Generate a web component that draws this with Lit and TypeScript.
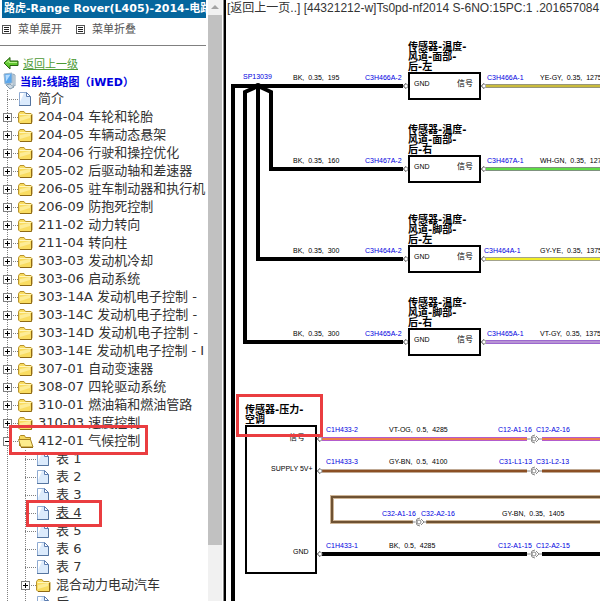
import { LitElement, html, svg, css } from "lit";
import { customElement, property } from "lit/decorators.js";
import { classMap } from "lit/directives/class-map.js";

interface TreeItem {
  label: string;
  kind: "page" | "folder" | "open";
  mark?: "section" | "leaf";
  children?: TreeItem[];
}

const page = (label: string, mark?: "leaf"): TreeItem => ({ label, kind: "page", mark });
const folder = (label: string): TreeItem => ({ label, kind: "folder" });

const TREE: TreeItem[] = [
  page("简介"),
  folder("204-04 车轮和轮胎"),
  folder("204-05 车辆动态悬架"),
  folder("204-06 行驶和操控优化"),
  folder("205-02 后驱动轴和差速器"),
  folder("206-05 驻车制动器和执行机"),
  folder("206-09 防抱死控制"),
  folder("211-02 动力转向"),
  folder("211-04 转向柱"),
  folder("303-03 发动机冷却"),
  folder("303-06 启动系统"),
  folder("303-14A 发动机电子控制 -"),
  folder("303-14C 发动机电子控制 -"),
  folder("303-14D 发动机电子控制 -"),
  folder("303-14E 发动机电子控制 - I"),
  folder("307-01 自动变速器"),
  folder("308-07 四轮驱动系统"),
  folder("310-01 燃油箱和燃油管路"),
  folder("310-03 速度控制"),
  {
    label: "412-01 气候控制",
    kind: "open",
    mark: "section",
    children: [
      page("表 1"),
      page("表 2"),
      page("表 3"),
      page("表 4", "leaf"),
      page("表 5"),
      page("表 6"),
      page("表 7"),
      folder("混合动力电动汽车"),
      page("后"),
    ],
  },
];

const pageIcon = html`<svg class="icon" viewBox="0 0 18 18" aria-hidden="true">
  <path d="M1.500 2.500h7l4 4v9h-11z" fill="#dcebfc" stroke="#8fabd2" />
  <path d="M2 3h4l-4 9z" fill="#fff" />
  <path d="M8.500 2.500v4h4z" fill="#fff" stroke="#5c7db0" />
  <path d="M1 15.500h11.500V7" fill="none" stroke="#54749f" />
</svg>`;

const folderIcon = html`<svg class="icon" viewBox="0 0 18 18" aria-hidden="true">
  <path d="M.5 14V5.500l1.500-2h4l1.500 2h5.500l1 1V14l-1 1.500H2z" fill="#f9dc61" stroke="#b9932c" />
  <path d="M1.500 6.500H13" stroke="#fff6bd" />
  <path d="M2 9l10-2v3L2 13z" fill="#fdec96" />
  <path d="M2 15.500h11.500V7" fill="none" stroke="#8f6a14" />
</svg>`;

const openIcon = html`<svg class="icon" viewBox="0 0 18 18" aria-hidden="true">
  <path d="M1.500 14V4.500l1-1h4l1 2h5v3" fill="#f6d860" stroke="#b08a24" />
  <path d="M.5 7.500h12l2.500 7.500H3z" fill="#fdec8c" stroke="#a98320" />
  <path d="M3 15.500h12" stroke="#8f6a14" />
</svg>`;

@customElement("tree-node")
class TreeNode extends LitElement {
  @property({ attribute: false }) item!: TreeItem;

  static styles = css`
    :host { display: block; }
    .row { display: flex; align-items: center; height: 18px; position: relative; white-space: nowrap; }
    .branch {
      flex: none; width: 18px; height: 18px; display: flex; align-items: center; position: relative;
      background:
        repeating-linear-gradient(#808080 0 1px, transparent 1px 2px) 7px 0 / 1px 18px no-repeat,
        repeating-linear-gradient(90deg, #808080 0 1px, transparent 1px 2px) 7px 9px / 11px 1px no-repeat;
    }
    .toggle {
      box-sizing: border-box; width: 9px; height: 9px; margin: 1px 0 0 3px; padding: 0;
      border: 1px solid #808080; border-radius: 0;
      background:
        linear-gradient(#000, #000) center / 5px 1px no-repeat,
        linear-gradient(#000, #000) center / 1px 5px no-repeat,
        #fff;
    }
    .toggle.minus { background: linear-gradient(#000, #000) center / 5px 1px no-repeat, #fff; }
    .icon { flex: none; width: 18px; height: 18px; display: block; }
    .label {
      padding-left: 2px; color: #333; text-decoration: none;
      font: 13px/18px "DejaVu Sans", "Noto Sans CJK SC", sans-serif;
    }
    .label.active { text-decoration: underline; }
    .kids {
      padding-left: 18px;
      background: repeating-linear-gradient(#808080 0 1px, transparent 1px 2px) 7px 0 / 1px 100% no-repeat;
    }
    .mark { position: absolute; box-sizing: border-box; border: 3px solid #ea3d40; pointer-events: none; z-index: 1; }
    .mark.section { left: 9px; top: -7px; width: 139px; height: 30px; }
    .mark.leaf { left: 8px; top: -4px; width: 76px; height: 27px; }
  `;

  render() {
    const { label, kind, mark, children } = this.item;
    return html`
      <div class="row">
        <span class="branch">
          ${kind === "page"
            ? null
            : html`<button
                class=${classMap({ toggle: true, minus: kind === "open" })}
                aria-label=${label}
                aria-expanded=${kind === "open" ? "true" : "false"}
              ></button>`}
        </span>
        ${kind === "page" ? pageIcon : kind === "open" ? openIcon : folderIcon}
        <a class=${classMap({ label: true, active: mark === "leaf" })} href="#">${label}</a>
        ${mark ? html`<span class=${classMap({ mark: true, [mark]: true })}></span>` : null}
      </div>
      ${children
        ? html`<div class="kids">${children.map((c) => html`<tree-node .item=${c}></tree-node>`)}</div>`
        : null}
    `;
  }
}

interface Sensor {
  y: number;
  id: string;
  idX: number;
  title: string[];
  length: string;
  wire: string;
  edge: string;
  core: string;
}

const SENSORS: Sensor[] = [
  { y: 86, id: "C3H466A", idX: 487, title: ["传感器-温度-", "风道-面部-", "后-左"], length: "195", wire: "YE-GY,  0.35,  1275", edge: "#98967a", core: "#c9bb3c" },
  { y: 169, id: "C3H467A", idX: 487, title: ["传感器-温度-", "风道-面部-", "后-右"], length: "160", wire: "WH-GN,  0.35,  1275", edge: "#7f927f", core: "#5fdc46" },
  { y: 259, id: "C3H464A", idX: 484, title: ["传感器-温度-", "风道-脚部-", "后-左"], length: "300", wire: "GY-YE,  0.35,  1375", edge: "#a3a38c", core: "#f2ee26" },
  { y: 342, id: "C3H465A", idX: 487, title: ["传感器-温度-", "风道-脚部-", "后-右"], length: "300", wire: "VT-GY,  0.35,  1375", edge: "#9c68cf", core: "#b793d4" },
];

const wire = (d: string, edge: string, core: string) => svg`
  <path class="wire edge" d=${d} stroke=${edge} />
  <path class="wire core" d=${d} stroke=${core} />`;

const plug = (x: number, y: number) => svg`
  <path class="pin" d="M${x - 3} ${y}l3-3M${x - 3} ${y}l3 3" />
  <circle class="pin" cx=${x} cy=${y} r="2" />`;

const joint = (x: number, y: number) => svg`
  <path class="pin" d="M${x - 7} ${y}h3M${x + 4} ${y}h4M${x + 1} ${y - 4}a4 4 0 1 0 0 8M${x + 2} ${y - 3}l3 3l-3 3" />
  <circle class="pin" cx=${x} cy=${y} r="2" />`;

const note = (x: number, y: number, text: string) => svg`<text class="note" x=${x} y=${y}>${text}</text>`;
const ref = (x: number, y: number, text: string) => svg`<text class="note ref" x=${x} y=${y}>${text}</text>`;
const title = (x: number, y: number, lines: string[]) =>
  lines.map((line, i) => svg`<text class="title" x=${x} y=${y + i * 10}>${line}</text>`);

@customElement("wiring-diagram")
class WiringDiagram extends LitElement {
  static styles = css`
    :host { display: block; overflow: hidden; }
    .sheet { display: block; width: 100%; height: 100%; }
    .wire { fill: none; }
    .edge { stroke-width: 4; }
    .core { stroke-width: 2; }
    .bus { fill: none; stroke: #000; stroke-width: 4; }
    .box { fill: #fff; stroke: #000; stroke-width: 2; }
    .pin { fill: none; stroke: #888; }
    .note { font: 7px "Liberation Sans", sans-serif; white-space: pre; fill: #000; }
    .ref { fill: #0000e0; }
    .signal { font: 8px "Noto Sans CJK SC", sans-serif; fill: #000; }
    .title { font: bold 10px "DejaVu Sans", "Noto Sans CJK SC", sans-serif; fill: #000; }
    .mark { fill: none; stroke: #ea3d40; stroke-width: 3; shape-rendering: crispEdges; }
  `;

  render() {
    return html`<svg class="sheet" role="img" aria-label="线路图">
      <g transform="translate(-227 -18)">
        <path class="bus" d="M403 86H233V2000" />
        <path class="bus" d="M258 86L245 92V342H403" />
        <path class="bus" d="M258 86V259H403" />
        <path class="bus" d="M258 86L271 92V169H403" />
        <circle cx="258" cy="86" r="3" />
        ${ref(243, 79, "SP13039")}
        ${SENSORS.map(
          (s) => svg`
            ${note(293, s.y - 6, `BK,  0.35,  ${s.length}`)}
            ${ref(365, s.y - 6, `${s.id}-2`)}
            ${plug(406, s.y)}
            <rect class="box" x="409" y=${s.y - 13} width="71" height="26" />
            ${title(408, s.y - 36, s.title)}
            ${note(414, s.y, "GND")}
            <text class="signal" x="457" y=${s.y}>信号</text>
            ${plug(484, s.y)}
            ${wire(`M486 ${s.y}H2000`, s.edge, s.core)}
            ${ref(s.idX, s.y - 6, `${s.id}-1`)}
            ${note(540, s.y - 6, s.wire)}
          `
        )}

        <rect class="box" x="246" y="426" width="70" height="147" />
        ${title(245, 413, ["传感器-压力-", "空调"])}
        <text class="signal" x="289" y="440">信号</text>
        ${note(271, 471, "SUPPLY 5V+")}
        ${note(293, 554, "GND")}

        ${wire("M322 439H527M542 439H2000", "#b35ccd", "#ee7d45")}
        ${wire("M322 471H527M542 471H2000", "#bfa893", "#8b4f24")}
        ${wire("M2000 497H332V522H413M426 522H2000", "#cdb496", "#6e5233")}
        <path class="bus" d="M322 554H527M542 554H2000" />
        ${plug(320, 439)}${plug(320, 471)}${plug(320, 554)}
        ${joint(534, 439)}${joint(534, 471)}${joint(534, 554)}${joint(419, 522)}

        ${ref(326, 432, "C1H433-2")}
        ${note(389, 432, "VT-OG,  0.5,  4285")}
        ${ref(498, 432, "C12-A1-16")}
        ${ref(536, 432, "C12-A2-16")}
        ${ref(326, 464, "C1H433-3")}
        ${note(389, 464, "GY-BN,  0.5,  4100")}
        ${ref(499, 464, "C31-L1-13")}
        ${ref(536, 464, "C31-L2-13")}
        ${ref(382, 516, "C32-A1-16")}
        ${ref(421, 516, "C32-A2-16")}
        ${note(502, 516, "GY-BN,  0.35,  1405")}
        ${ref(326, 548, "C1H433-1")}
        ${note(389, 548, "BK,  0.5,  4285")}
        ${ref(498, 548, "C12-A1-15")}
        ${ref(536, 548, "C12-A2-15")}
        <rect class="mark" x="237" y="395" width="84" height="40" />
      </g>
    </svg>`;
  }
}

@customElement("app-root")
class AppRoot extends LitElement {
  static styles = css`
    :host {
      display: grid; grid-template-columns: 37% minmax(0, 1fr); height: 100vh; overflow: hidden;
      background: #fff; font-family: "DejaVu Sans", "Noto Sans CJK SC", sans-serif;
    }
    .side { display: flex; min-width: 0; min-height: 0; }
    .content { flex: 1; min-width: 0; overflow: hidden; padding-right: 2px; }
    .name {
      margin: 0 0 0 2px; padding-left: 2px; height: 18px; overflow: hidden; white-space: nowrap;
      background: #05669d; color: #fff; font-size: 11px; line-height: 18px; font-weight: bold;
    }
    .menu {
      display: flex; gap: 14px; height: 28px; padding: 0 0 4px 2px; align-items: center;
      border-bottom: 1px solid #808080; box-sizing: border-box;
    }
    .cmd {
      display: flex; align-items: center; gap: 7px; padding: 0; border: 0; background: none;
      color: #555; font: 11px/18px "DejaVu Sans", "Noto Sans CJK SC", sans-serif;
    }
    .list { width: 9px; height: 9px; display: block; }
    .line { display: flex; align-items: center; height: 18px; white-space: nowrap; padding-left: 3px; gap: 4px; }
    .first { padding-top: 8px; }
    .arrow { width: 16px; height: 14px; flex: none; }
    .pc { width: 13px; height: 18px; flex: none; }
    .back { color: #4d9a35; font-size: 11px; }
    .here { color: #0000e0; font-size: 11px; font-weight: bold; }
    .bar { flex: none; width: 14px; display: flex; flex-direction: column; background: #f1f1f1; }
    .up { flex: none; height: 15px; width: 14px; display: block; }
    .thumb { flex: 530; background: #c1c1c1; }
    .rest { flex: 56; }
    .main {
      display: flex; flex-direction: column; min-width: 0;
      border-left: 2px solid #000; margin-left: 2px; box-shadow: -1px 0 #8a8a8a; padding-left: 1px;
    }
    .top {
      height: 18px; overflow: hidden; white-space: nowrap; color: #333;
      font: 12px/16px "Liberation Sans", "Noto Sans CJK SC", sans-serif;
    }
    .top a { color: inherit; text-decoration: none; }
    .diagram { flex: 1; min-height: 0; }
  `;

  private command(label: string) {
    return html`<button class="cmd">
      <svg class="list" viewBox="0 0 9 9" aria-hidden="true">
        <rect x=".5" y=".5" width="8" height="8" fill="#fff" stroke="#555" />
        <path d="M2 2.500h5M2 4.500h5M2 6.500h5" stroke="#222" />
      </svg>${label}
    </button>`;
  }

  render() {
    return html`
      <aside class="side">
        <div class="content">
          <div class="name">路虎-Range Rover(L405)-2014-电路图</div>
          <div class="menu">${this.command("菜单展开")}${this.command("菜单折叠")}</div>
          <div class="line first">
            <svg class="arrow" viewBox="0 0 16 14" aria-hidden="true">
              <path d="M1 7l6-5.500V5h8v4.500H7V13z" fill="#62c932" stroke="#25610f" />
              <path d="M3.500 6.500L6 4.500V6.500h8" fill="none" stroke="#b8f08c" />
            </svg>
            <a class="back" href="#">返回上一级</a>
          </div>
          <div class="line">
            <svg class="pc" viewBox="0 0 13 18" aria-hidden="true">
              <path d="M1 2l8-1v10l-7 1z" fill="#5aa6ec" stroke="#9cb6cc" />
              <path d="M2.500 3l5-.5-4.500 7z" fill="#b4dcff" />
              <path d="M10 2l2 1v11l-2-1z" fill="#dfe8ef" stroke="#8fa6b8" />
              <path d="M3 13l4-1 4 3-4 2z" fill="#cfdbe5" stroke="#7f98ac" />
            </svg>
            <span class="here">当前:线路图（iWED）</span>
          </div>
          ${TREE.map((item) => html`<tree-node .item=${item}></tree-node>`)}
        </div>
        <div class="bar">
          <svg class="up" viewBox="0 0 14 15" aria-hidden="true"><path d="M3 9l4-4 4 4z" fill="#a3a3a3" /></svg>
          <div class="thumb"></div>
          <div class="rest"></div>
        </div>
      </aside>
      <main class="main">
        <div class="top"><a href="#">[返回上一页..]</a> [44321212-w]Ts0pd-nf2014 S-6NO:15PC:1 .201657084</div>
        <wiring-diagram class="diagram"></wiring-diagram>
      </main>
    `;
  }
}
